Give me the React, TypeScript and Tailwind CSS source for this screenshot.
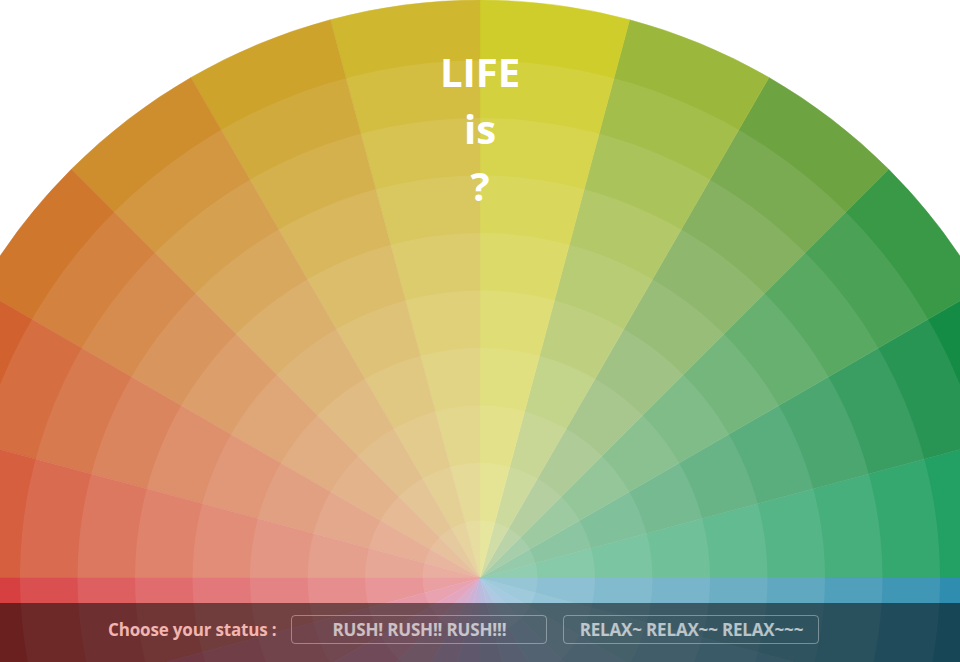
import React from "react";

// wedge colours, counter-clockwise from 3 o'clock, 15deg each
const WEDGES = [
  "#0f9755", "#148c46", "#3a9946", "#6ea342", "#9cb83c", "#cfcd2b",
  "#cfb830", "#cda32c", "#ce8e2e", "#cf772d", "#d1612e", "#d3502f",
  "#d42f30", "#d33552", "#c83f72", "#b24a8c", "#9a55a6", "#7f60b2",
  "#6a6cba", "#5a7cc0", "#4a8cc4", "#3a92c0", "#2c8eb6", "#1c84a8",
];

const CX = 480;
const CY = 578;
const R = 578;
const RING = 57.5;

const pt = (deg: number, r: number) => {
  const a = (deg * Math.PI) / 180;
  return `${(CX + r * Math.cos(a)).toFixed(2)} ${(CY - r * Math.sin(a)).toFixed(2)}`;
};

const ColorWheel = () => (
  <svg
    className="absolute inset-0"
    width={960}
    height={662}
    viewBox="0 0 960 662"
  >
    {WEDGES.map((c, i) => (
      <path
        key={i}
        d={`M ${CX} ${CY} L ${pt(i * 15, R)} A ${R} ${R} 0 0 0 ${pt((i + 1) * 15, R)} Z`}
        fill={c}
        stroke={c}
        strokeWidth={0.5}
      />
    ))}
    {/* each inner ring is washed a bit more towards white */}
    {[9, 8, 7, 6, 5, 4, 3, 2, 1].map((k) => (
      <circle key={k} cx={CX} cy={CY} r={RING * k} fill="#fff" fillOpacity={0.085} />
    ))}
  </svg>
);

const StatusButton = ({ label }: { label: string }) => (
  <button className="flex h-[29px] w-[256px] items-center justify-center rounded-[4px] border border-white/35 text-[17px] font-bold tracking-[-0.01em] text-white/65">
    {label}
  </button>
);

export default function App() {
  return (
    <div className="relative h-[662px] w-[960px] overflow-hidden bg-white font-['Open_Sans',sans-serif]">
      <ColorWheel />
      <div className="relative flex h-full flex-col">
        <h1 className="pt-[43px] text-center text-[40px] font-bold leading-[57px] text-white">
          LIFE
          <br />
          is
          <br />
          ?
        </h1>
        <div className="mt-auto flex h-[59px] items-start bg-black/50 pl-[108px] pt-[12px]">
          <span className="mr-[15px] flex h-[29px] items-center text-[17px] font-bold tracking-[-0.01em] text-[#f2b5b0]">
            Choose your status :
          </span>
          <div className="flex gap-4">
            <StatusButton label="RUSH! RUSH!! RUSH!!!" />
            <StatusButton label="RELAX~ RELAX~~ RELAX~~~" />
          </div>
        </div>
      </div>
    </div>
  );
}
